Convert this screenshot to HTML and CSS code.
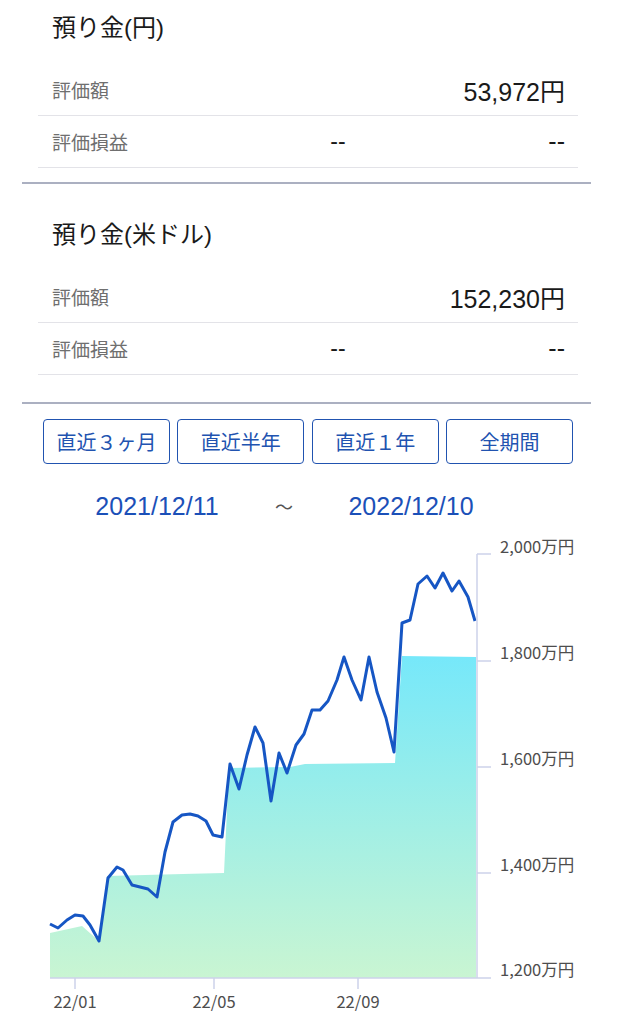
FILE: index.html
```html
<!DOCTYPE html>
<html lang="ja">
<head>
	<meta charset="utf-8">
	<title>預り金</title>
	<link rel="stylesheet" href="styles.css">
</head>
<body>
	<main class="page">
		<section class="deposit deposit-first">
			<h2 class="deposit-title">預り金(円)</h2>
			<div class="deposit-list">
				<div class="deposit-row">
					<span class="row-label">評価額</span>
					<span class="row-value row-value-wide">53,972円</span>
				</div>
				<div class="deposit-row">
					<span class="row-label">評価損益</span>
					<span class="row-mid">--</span>
					<span class="row-value">--</span>
				</div>
			</div>
		</section>
		<section class="deposit deposit-second">
			<h2 class="deposit-title">預り金(米ドル)</h2>
			<div class="deposit-list">
				<div class="deposit-row">
					<span class="row-label">評価額</span>
					<span class="row-value row-value-wide">152,230円</span>
				</div>
				<div class="deposit-row">
					<span class="row-label">評価損益</span>
					<span class="row-mid">--</span>
					<span class="row-value">--</span>
				</div>
			</div>
		</section>
		<div class="period-buttons">
			<button type="button" class="period-btn">直近３ヶ月</button>
			<button type="button" class="period-btn">直近半年</button>
			<button type="button" class="period-btn">直近１年</button>
			<button type="button" class="period-btn">全期間</button>
		</div>
	</main>
	<div class="date-range">
		<span class="date">2021/12/11</span>
		<span class="tilde">～</span>
		<span class="date">2022/12/10</span>
	</div>
	<svg class="chart" width="617" height="494" viewBox="0 530 617 494">
		<defs>
			<linearGradient id="area-fill" x1="0" y1="0" x2="0" y2="1">
				<stop offset="0" stop-color="#76e8fa"></stop>
				<stop offset="1" stop-color="#c9f5d2"></stop>
			</linearGradient>
		</defs>
		<path class="area" d="M50 933 L82 926 L99 941 L107 876 L183 874 L224 873 L229 768 L290 767 L305 764 L395 763 L402 656 L476 657 L476 978 L50 978 Z"></path>
		<polyline class="line" points="50,924 58,928 67,920 75,915 83,916 90,925 99,941 108,878 117,867 123,870 132,885 140,887 148,889 157,897 165,852 173,822 182,815 190,814 198,816 206,821 213,835 222,837 230,764 239,789 247,755 255,727 263,743 271,801 279,753 287,773 296,745 304,734 312,710 320,710 328,701 337,680 344,657 352,680 361,700 369,657 377,692 386,718 394,752 402,623 410,620 418,584 427,576 435,588 443,573 452,591 459,581 468,597 475,621"></polyline>
		<g class="axis">
			<line x1="477" y1="554" x2="477" y2="978"></line>
			<line x1="50" y1="978" x2="491" y2="978"></line>
			<line x1="477" y1="554" x2="491" y2="554"></line>
			<line x1="477" y1="661" x2="491" y2="661"></line>
			<line x1="477" y1="767" x2="491" y2="767"></line>
			<line x1="477" y1="873" x2="491" y2="873"></line>
			<line x1="75" y1="978" x2="75" y2="989"></line>
			<line x1="214" y1="978" x2="214" y2="989"></line>
			<line x1="358" y1="978" x2="358" y2="989"></line>
		</g>
		<g class="axis-label">
			<text x="500" y="546">2,000万円</text>
			<text x="500" y="652">1,800万円</text>
			<text x="500" y="758">1,600万円</text>
			<text x="500" y="864">1,400万円</text>
			<text x="500" y="969">1,200万円</text>
		</g>
		<g class="axis-label axis-label-x">
			<text x="75" y="1001">22/01</text>
			<text x="214" y="1001">22/05</text>
			<text x="358" y="1001">22/09</text>
		</g>
	</svg>
</body>
</html>
```

FILE: styles.css
```css
body {
	margin: 0;
	background: #fff;
	font-family: "Liberation Sans", "Noto Sans CJK JP", sans-serif;
	color: #1a1a1a;
}
.page {
	padding: 0 26px 0 22px;
}
.deposit {
	border-bottom: 2px solid #abb0c1;
}
.deposit-first {
	padding-bottom: 14px;
}
.deposit-second {
	padding-top: 37px;
	padding-bottom: 27px;
}
.deposit-first .deposit-title {
	padding-top: 14px;
}
.deposit-title {
	margin: 0;
	padding: 0 0 22px 30px;
	font-size: 24px;
	font-weight: normal;
	line-height: 28px;
}
.deposit-list {
	margin: 0 13px 0 16px;
}
.deposit-row {
	display: grid;
	grid-template-columns: 240px 92px 1fr;
	align-items: center;
	height: 51px;
	padding: 0 13px 0 14px;
	border-bottom: 1px solid #e3e3e8;
}
.row-label {
	font-size: 19px;
	color: #6f6f6f;
}
.row-mid {
	text-align: center;
	font-size: 23px;
}
.row-value {
	text-align: right;
	font-size: 25px;
}
.row-value-wide {
	grid-column: 2 / 4;
}
.period-buttons {
	display: grid;
	grid-template-columns: repeat(4, 1fr);
	gap: 7.5px;
	margin: 15px 18px 0 21px;
}
.period-btn {
	height: 45px;
	background: #fff;
	border: 1.5px solid #2153b0;
	border-radius: 4px;
	color: #2153b0;
	font-family: "Noto Sans CJK JP", sans-serif;
	font-size: 20px;
	padding: 0;
}
.date-range {
	display: flex;
	padding-left: 77px;
	margin-top: 28px;
	line-height: 28px;
}
.date {
	width: 160px;
	text-align: center;
	font-size: 25px;
	color: #1b50b8;
}
.tilde {
	width: 94px;
	text-align: center;
	font-family: "Noto Sans CJK JP", sans-serif;
	font-size: 18px;
	color: #555;
}
.chart {
	display: block;
	margin-top: 10px;
}
.area {
	fill: url(#area-fill);
}
.line {
	fill: none;
	stroke: #1656c4;
	stroke-width: 3;
	stroke-linejoin: round;
}
.axis line {
	stroke: #cdd2ea;
	stroke-width: 1.5;
}
.axis-label text {
	font-family: "Noto Sans CJK JP", sans-serif;
	font-size: 16.5px;
	fill: #4d4d4d;
	dominant-baseline: central;
}
.axis-label-x text {
	text-anchor: middle;
}
```
